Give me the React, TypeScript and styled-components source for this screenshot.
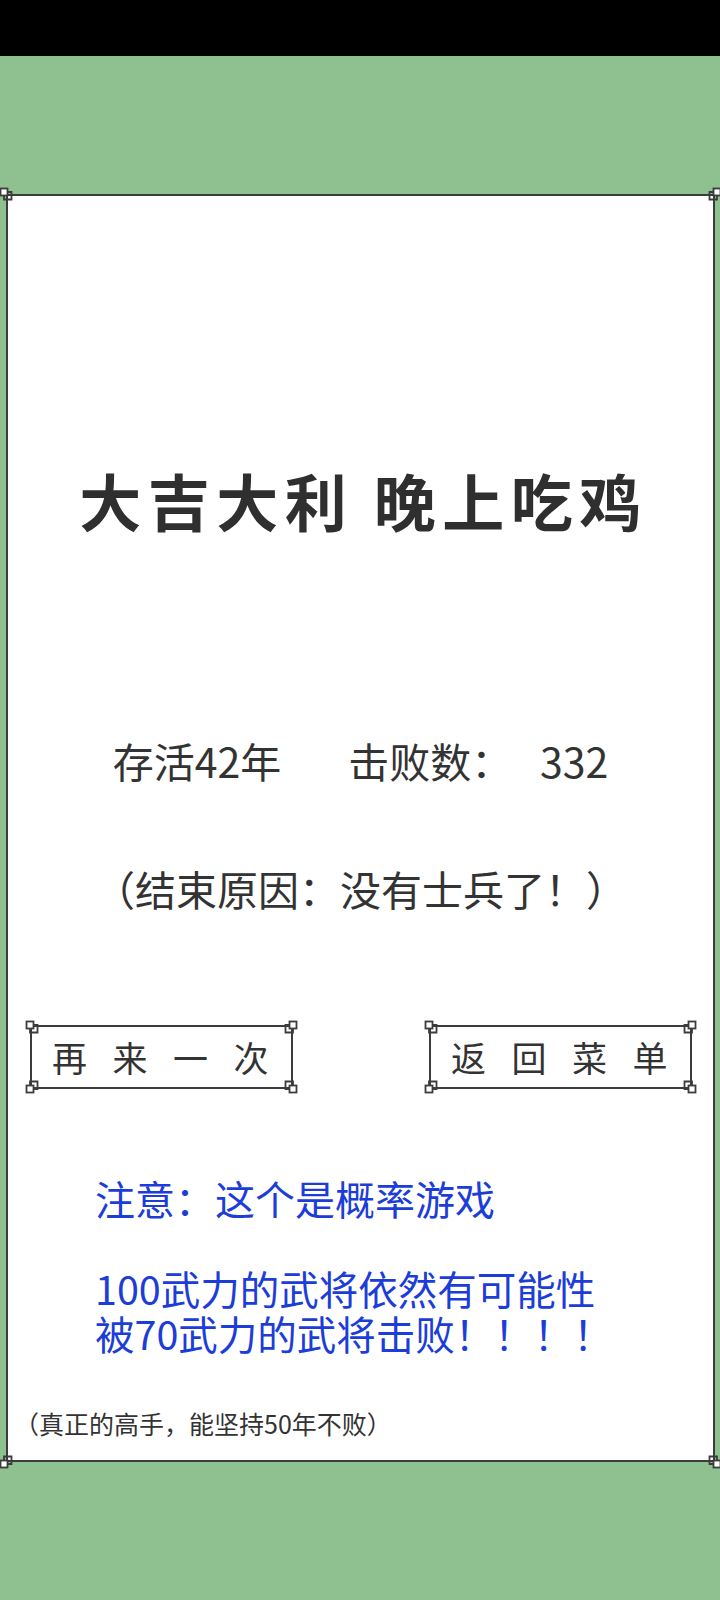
import React from "react";
import styled, { createGlobalStyle } from "styled-components";

const GlobalStyle = createGlobalStyle`
  html, body {
    margin: 0;
    padding: 0;
    background: #8fc08f;
  }
  body {
    font-family: "Noto Sans CJK SC", "Noto Sans", sans-serif;
    color: #333333;
  }
`;

const LINE = "#3c3c3c";

type Corner = "tl" | "tr" | "bl" | "br";

const flip: Record<Corner, string> = {
  tl: "none",
  tr: "scaleX(-1)",
  bl: "scaleY(-1)",
  br: "scale(-1, -1)",
};

const OrnamentSvg = styled.svg<{ $corner: Corner; $off: number }>`
  position: absolute;
  width: 18px;
  height: 18px;
  transform: ${(p) => flip[p.$corner]};
  ${(p) => (p.$corner[0] === "t" ? `top: -${p.$off}px;` : `bottom: -${p.$off}px;`)}
  ${(p) => (p.$corner[1] === "l" ? `left: -${p.$off}px;` : `right: -${p.$off}px;`)}
`;

function Ornament({ corner, off }: { corner: Corner; off: number }) {
  return (
    <OrnamentSvg $corner={corner} $off={off} viewBox="0 0 18 18">
      <rect x="1.5" y="1.5" width="7" height="7" fill="#fff" stroke={LINE} strokeWidth="1.8" />
      <path d="M8.5 5 H12.5 V12.5 H5 V8.5" fill="none" stroke={LINE} strokeWidth="1.8" />
    </OrnamentSvg>
  );
}

function Corners({ off }: { off: number }) {
  return (
    <>
      <Ornament corner="tl" off={off} />
      <Ornament corner="tr" off={off} />
      <Ornament corner="bl" off={off} />
      <Ornament corner="br" off={off} />
    </>
  );
}

const Screen = styled.div`
  width: 720px;
  min-height: 1600px;
  display: flex;
  flex-direction: column;
`;

const StatusBar = styled.div`
  height: 56px;
  background: #000;
`;

const Panel = styled.div`
  position: relative;
  box-sizing: border-box;
  margin: 138px 5px 0 6px;
  height: 1268px;
  background: #fff;
  border: 2px solid ${LINE};
  display: flex;
  flex-direction: column;
`;

const Title = styled.h1`
  margin: 268px 0 0;
  padding-left: 6px;
  font-size: 62px;
  line-height: 72px;
  letter-spacing: 6.5px;
  font-weight: 700;
  color: #2f2f2f;
  text-align: center;
  white-space: pre;
`;

const Stats = styled.div`
  margin-top: 200px;
  display: flex;
  justify-content: center;
  gap: 67px;
  font-size: 41px;
  line-height: 48px;
  color: #333;
`;

const Score = styled.span`
  white-space: pre;
`;

const Reason = styled.div`
  margin-top: 80px;
  font-size: 41px;
  line-height: 48px;
  text-align: center;
  color: #333;
`;

const ButtonRow = styled.div`
  margin-top: 113px;
  padding: 0 21px 0 22px;
  display: flex;
  justify-content: space-between;
`;

const FrameButton = styled.button`
  position: relative;
  box-sizing: border-box;
  width: 263px;
  height: 64px;
  padding: 0 0 0 20px;
  display: flex;
  align-items: center;
  background: #fff;
  border: 2px solid ${LINE};
  font-family: "Noto Sans CJK SC", sans-serif;
  font-size: 35px;
  letter-spacing: 25.5px;
  line-height: 60px;
  white-space: nowrap;
  color: #333;
  cursor: pointer;
`;

const Notice = styled.div`
  padding-left: 87px;
  color: #1c3dd8;
  white-space: nowrap;
`;

const NoticeHead = styled(Notice)`
  margin-top: 85px;
  font-size: 40px;
  line-height: 48px;
`;

const NoticeBody = styled.div`
  margin-top: 43px;
  display: flex;
  flex-direction: column;
`;

const NoticeLine = styled(Notice)`
  font-size: 39.5px;
  line-height: 45px;
  height: 45px;
`;

const Footer = styled.div`
  margin-top: 53px;
  padding-left: 6px;
  font-size: 25px;
  line-height: 30px;
  color: #333;
`;

export default function App() {
  return (
    <Screen>
      <GlobalStyle />
      <StatusBar />
      <Panel>
        <Corners off={9} />
        <Title>大吉大利 晚上吃鸡</Title>
        <Stats>
          <span>存活42年</span>
          <Score>击败数：   332</Score>
        </Stats>
        <Reason>（结束原因：没有士兵了！）</Reason>
        <ButtonRow>
          <FrameButton>
            再来一次
            <Corners off={7} />
          </FrameButton>
          <FrameButton>
            返回菜单
            <Corners off={7} />
          </FrameButton>
        </ButtonRow>
        <NoticeHead>注意：这个是概率游戏</NoticeHead>
        <NoticeBody>
          <NoticeLine>100武力的武将依然有可能性</NoticeLine>
          <NoticeLine>被70武力的武将击败！！！！</NoticeLine>
        </NoticeBody>
        <Footer>（真正的高手，能坚持50年不败）</Footer>
      </Panel>
    </Screen>
  );
}
